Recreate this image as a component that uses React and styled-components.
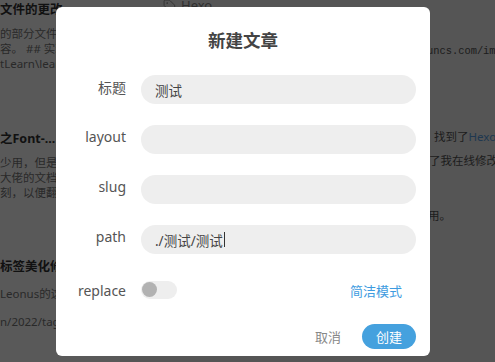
import React from 'react';
import styled, { createGlobalStyle } from 'styled-components';
import { Tag } from 'lucide-react';

const GlobalStyle = createGlobalStyle`
  html, body {
    margin: 0;
    padding: 0;
    overflow: hidden;
  }
  body {
    font-family: 'Noto Sans', 'Noto Sans CJK SC', sans-serif;
  }
`;

const Page = styled.div`
  display: flex;
  width: 100%;
  height: 362px;
  overflow: hidden;
`;

const Sidebar = styled.div`
  width: 120px;
  flex-shrink: 0;
  background: #ffffff;
  display: flex;
  flex-direction: column;
`;

const PostItem = styled.div`
  height: ${p => p.height || 129}px;
  flex-shrink: 0;
  display: flex;
  flex-direction: column;
  overflow: hidden;
  white-space: nowrap;
`;

const PostTitle = styled.div`
  font-size: 12.5px;
  font-weight: 700;
  line-height: 20px;
  color: #333;
`;

const PostDesc = styled.div`
  margin-top: ${p => (p.loose ? 3 : 5.5)}px;
  font-size: 11.5px;
  line-height: ${p => (p.loose ? 28 : 15)}px;
  color: #777;
`;

const Editor = styled.div`
  flex: 1;
  background: #f3f3f3;
  display: flex;
  flex-direction: column;
  white-space: nowrap;
  overflow: hidden;
  color: #666;
`;

const TagRow = styled.div`
  display: flex;
  align-items: center;
  gap: 5px;
  height: 10px;
  padding-left: 43px;
  font-size: 13px;
  color: #888;
`;

const EditorLine = styled.div`
  margin-top: ${p => p.gap}px;
  padding-left: ${p => p.indent}px;
  font-size: 11.5px;
  line-height: 16px;
  color: #555;
`;

const Mono = styled.span`
  font-family: 'Liberation Mono', monospace;
  font-size: 10.4px;
`;

const Link = styled.span`
  color: #5a9fe4;
`;

const Overlay = styled.div`
  position: fixed;
  inset: 0;
  background: rgba(0, 0, 0, 0.65);
  display: flex;
  align-items: flex-start;
  padding: 7px 0 0 56px;
`;

const Dialog = styled.div`
  width: 374px;
  height: 349px;
  background: #fff;
  border-radius: 6px;
  display: flex;
  flex-direction: column;
  box-sizing: border-box;
  padding-bottom: 7px;
`;

const Title = styled.h2`
  margin: 21px 0 0;
  text-align: center;
  font-size: 17.5px;
  line-height: 24px;
  font-weight: 700;
  color: #444;
`;

const Form = styled.div`
  margin-top: 23px;
  display: grid;
  grid-template-columns: 70px 1fr;
  column-gap: 15px;
  row-gap: 21px;
  padding-right: 14px;
`;

const Label = styled.div`
  height: 29px;
  display: flex;
  align-items: center;
  justify-content: flex-end;
  font-size: 14px;
  color: #555;
  margin-top: ${p => (p.centered ? 1 : -3)}px;
`;

const Field = styled.div`
  height: 29px;
  border-radius: 15px;
  background: #eeeeee;
  display: flex;
  align-items: center;
  padding-left: 14px;
  font-size: 13.5px;
  color: #444;
`;

const Caret = styled.span`
  display: inline-block;
  width: 1px;
  height: 15px;
  margin-left: 1px;
  background: #333;
`;

const OptionRow = styled.div`
  height: 29px;
  display: flex;
  align-items: center;
  justify-content: space-between;
`;

const Switch = styled.div`
  width: 36px;
  height: 18px;
  border-radius: 9px;
  background: #eeeeee;
  display: flex;
  align-items: center;
  padding-left: 1px;
  box-sizing: border-box;
`;

const Knob = styled.div`
  width: 15px;
  height: 15px;
  border-radius: 50%;
  background: #b2b2b2;
`;

const ModeLink = styled.a`
  margin-right: 14px;
  margin-top: 1px;
  font-size: 13px;
  color: #3d9be0;
  cursor: pointer;
`;

const Footer = styled.div`
  margin-top: auto;
  display: flex;
  justify-content: flex-end;
  align-items: center;
  gap: 21px;
  padding-right: 14px;
`;

const Button = styled.button`
  height: 25px;
  border: none;
  border-radius: 13px;
  padding: 0 ${p => (p.primary ? 14 : 0)}px;
  background: ${p => (p.primary ? '#45a1de' : 'transparent')};
  color: ${p => (p.primary ? '#fff' : '#888')};
  font-family: inherit;
  font-size: 13px;
  cursor: pointer;
`;

const posts = [
  { title: '文件的更改', lines: ['的部分文件内容', '容。 ## 实现', 'tLearn\\learn'] },
  { title: '之Font-...', lines: ['少用，但是', '大佬的文档', '刻，以便翻阅'] },
  { title: '标签美化修', lines: ['Leonus的这', 'n/2022/tag'], loose: true },
];

const fields = [
  { label: '标题', value: '测试' },
  { label: 'layout', value: '' },
  { label: 'slug', value: '' },
  { label: 'path', value: './测试/测试', focused: true },
];

export default function App() {
  return (
    <>
      <GlobalStyle />
      <Page>
        <Sidebar>
          {posts.map((post, i) => (
            <PostItem key={i} height={i === 0 ? 129 : 128}>
              <PostTitle>{post.title}</PostTitle>
              <PostDesc loose={post.loose}>
                {post.lines.map(l => (
                  <div key={l}>{l}</div>
                ))}
              </PostDesc>
            </PostItem>
          ))}
        </Sidebar>
        <Editor>
          <TagRow>
            <Tag size={13} strokeWidth={1.6} />
            Hexo
          </TagRow>
          <EditorLine gap={32} indent={307}>
            <Mono>uncs.com/img/hexo.png</Mono>
          </EditorLine>
          <EditorLine gap={70} indent={314}>
            找到了<Link>Hexo</Link>
          </EditorLine>
          <EditorLine gap={8} indent={309}>
            了我在线修改
          </EditorLine>
          <EditorLine gap={39} indent={308}>
            用。
          </EditorLine>
        </Editor>
      </Page>
      <Overlay>
        <Dialog>
          <Title>新建文章</Title>
          <Form>
            {fields.map(f => (
              <React.Fragment key={f.label}>
                <Label>{f.label}</Label>
                <Field>
                  {f.value}
                  {f.focused && <Caret />}
                </Field>
              </React.Fragment>
            ))}
            <Label centered>replace</Label>
            <OptionRow>
              <Switch>
                <Knob />
              </Switch>
              <ModeLink>简洁模式</ModeLink>
            </OptionRow>
          </Form>
          <Footer>
            <Button>取消</Button>
            <Button primary>创建</Button>
          </Footer>
        </Dialog>
      </Overlay>
    </>
  );
}
